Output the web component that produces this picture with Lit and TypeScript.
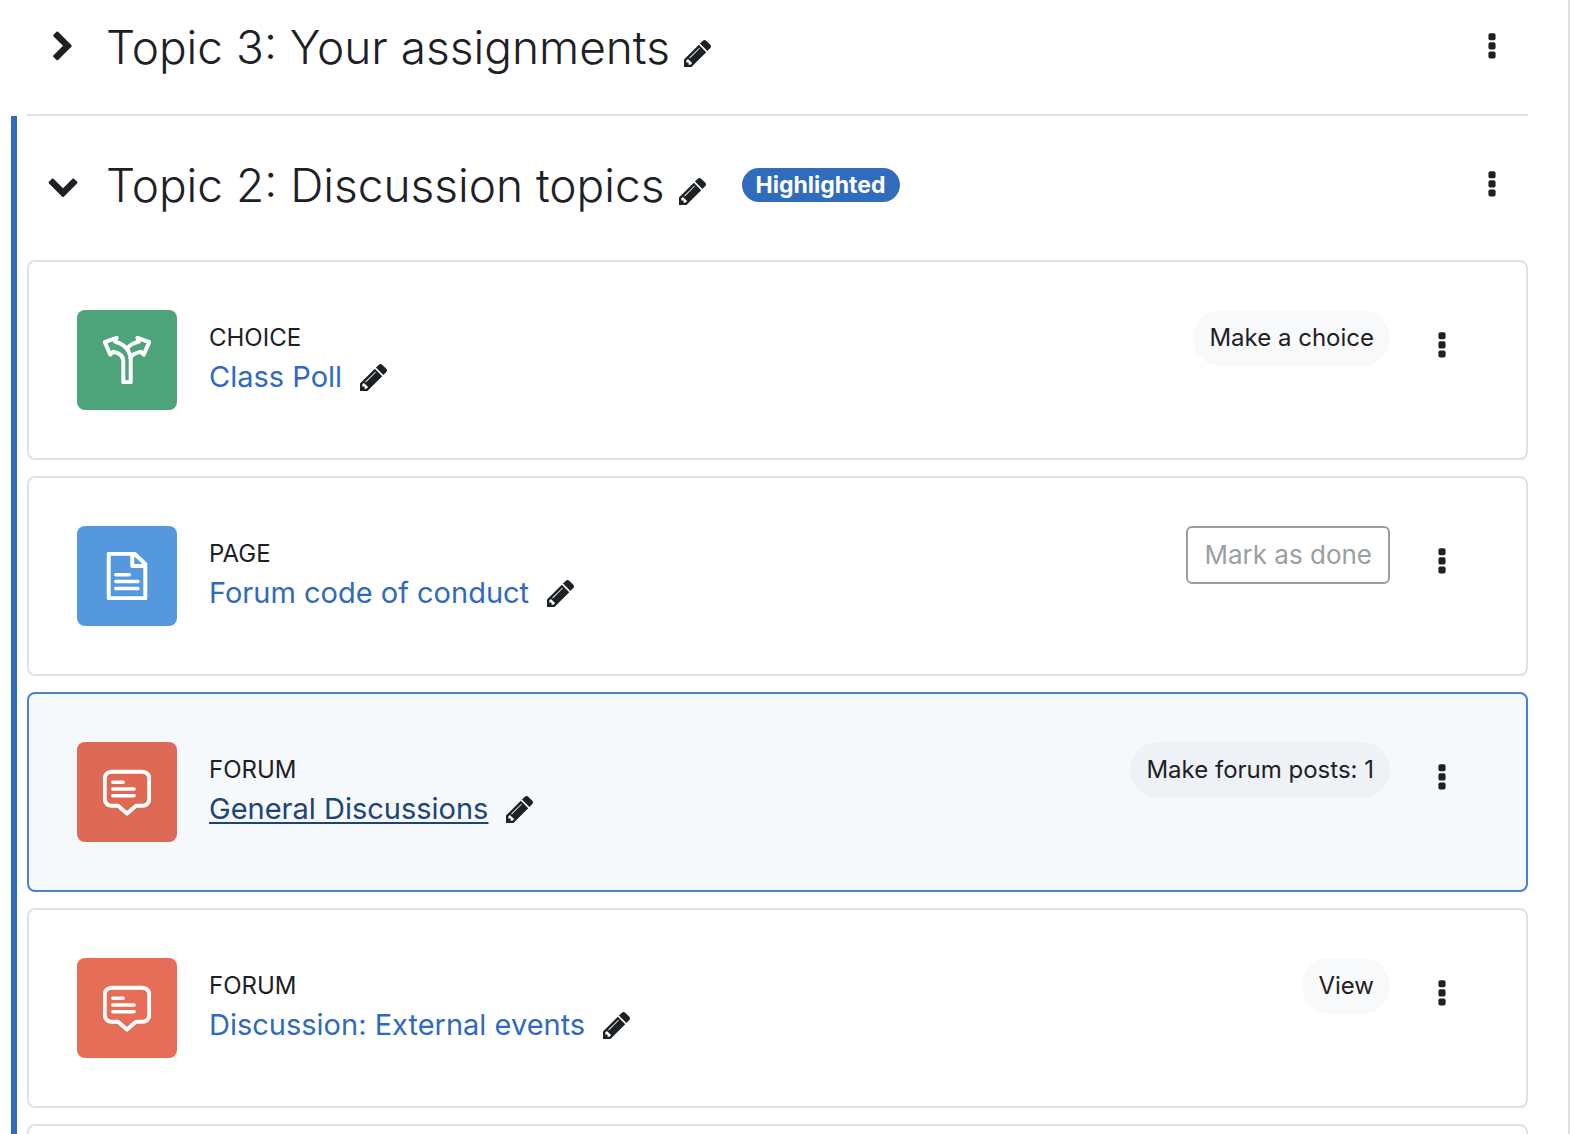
import { LitElement, html, css, svg, nothing } from "lit";
import { customElement, property } from "lit/decorators.js";
import { classMap } from "lit/directives/class-map.js";

type Kind = "choice" | "page" | "forum";

interface Activity {
  kind: Kind;
  name: string;
  action: string;
  outlined?: boolean;
  active?: boolean;
}

const ACTIVITIES: Activity[] = [
  { kind: "choice", name: "Class Poll", action: "Make a choice" },
  { kind: "page", name: "Forum code of conduct", action: "Mark as done", outlined: true },
  { kind: "forum", name: "General Discussions", action: "Make forum posts: 1", active: true },
  { kind: "forum", name: "Discussion: External events", action: "View" },
];

const shared = css`
  * {
    box-sizing: border-box;
  }
  button {
    margin: 0;
    padding: 0;
    border: 0;
    background: none;
    color: inherit;
    font: inherit;
    cursor: pointer;
  }
  svg {
    display: block;
    fill: currentColor;
  }
  .edit {
    flex: none;
  }
  .menu {
    flex: none;
    display: grid;
    justify-items: center;
    width: 72px;
  }
`;

const pencil = html`<svg width="27" height="27" viewBox="128 149 1515 1515" aria-hidden="true">
  <path d="M491 1536l91-91-235-235-91 91v107h128v128h107zm523-928q0-22-22-22-10 0-17 7l-542 542q-7 7-7 17 0 22 22 22 10 0 17-7l542-542q7-7 7-17zm-54-192l416 416-832 832h-416v-416zm683 96q0 53-37 90l-166 166-416-416 166-165q36-38 90-38 53 0 91 38l235 234q37 39 37 91z"/>
</svg>`;

const dots = html`<svg width="32" height="32" viewBox="0 0 1792 1792" aria-hidden="true">
  <rect x="696" y="120" width="400" height="400" rx="100"/>
  <rect x="696" y="632" width="400" height="400" rx="100"/>
  <rect x="696" y="1144" width="400" height="400" rx="100"/>
</svg>`;

const chevron = (open: boolean) => html`<svg width="32" height="32" viewBox="0 0 1792 1792" aria-hidden="true">
  ${open
    ? svg`<path d="M1683 808l-742 741q-19 19-45 19t-45-19l-742-741q-19-19-19-45.500t19-45.500l166-165q19-19 45-19t45 19l531 531 531-531q19-19 45-19t45 19l166 165q19 19 19 45.500t-19 45.500z"/>`
    : svg`<path d="M1363 877l-742 742q-19 19-45 19t-45-19l-166-166q-19-19-19-45t19-45l531-531-531-531q-19-19-19-45t19-45l166-166q19-19 45-19t45 19l742 742q19 19 19 45t-19 45z"/>`}
</svg>`;

const GLYPHS = {
  choice: svg`
    <path d="M20.300 46.300V25c0-5-4.300-8-10.300-9.200l-2.700 2.800L1.800 6.200 13.600 1.800l-1.300 3.900C19 7.500 24 11 26 16.500c1 2 1.700 4.500 1.700 7.500v22.300z"/>
    <path d="M24 13c2.500-4 6.500-6.300 11.700-7.300L34.400 1.800 46.200 6.200l-5.500 12.400-2.700-2.800c-5 1-9 3-10.500 6"/>`,
  page: svg`
    <path d="M5.700 1.700H31.500L42.300 12V46.300H5.700zM29.300 2V14H42"/>
    <path d="M12.800 22.700H26.200M12.800 29.600H35M12.800 36.400H35" stroke-width="3.500"/>`,
  forum: svg`
    <path d="M8.500 3.700h31a6.800 6.800 0 0 1 6.800 6.800V31a6.800 6.800 0 0 1-6.800 6.800H33L24 45.600 15 37.800H8.500A6.800 6.800 0 0 1 1.700 31V10.500A6.800 6.800 0 0 1 8.500 3.700z"/>
    <path d="M9.800 14.300H20.200M9.800 21H31M9.800 27.800H31" stroke-width="3.500"/>`,
};

@customElement("course-activity")
export class CourseActivity extends LitElement {
  @property({ attribute: false }) activity!: Activity;

  static styles = [
    shared,
    css`
      :host {
        display: block;
      }
      .card {
        display: flex;
        align-items: flex-start;
        min-height: 200px;
        padding: 48px;
        border: 2px solid #dee2e6;
        border-radius: 8px;
      }
      .card.active {
        background: #f5f9fc;
        border-color: #4a82c6;
      }
      .tile {
        flex: none;
        display: grid;
        place-items: center;
        width: 100px;
        height: 100px;
        border-radius: 8px;
        color: #fff;
      }
      .tile svg {
        fill: none;
        stroke: currentColor;
        stroke-linecap: round;
        stroke-linejoin: round;
      }
      .choice {
        background: #4da37a;
      }
      .page {
        background: #5598dd;
      }
      .forum {
        background: #e66d57;
      }
      .active .forum {
        background: #de6a55;
      }
      .info {
        flex: 1;
        min-width: 0;
        min-height: 100px;
        margin-left: 32px;
        padding-bottom: 2px;
        display: flex;
        flex-direction: column;
        justify-content: center;
      }
      .kind {
        font-size: 24px;
        line-height: 36px;
        text-transform: uppercase;
      }
      .title {
        display: flex;
        align-items: center;
        gap: 18px;
        line-height: 42px;
      }
      .link {
        color: #306abc;
        text-decoration: none;
      }
      .active .link {
        color: #1d4479;
        text-decoration: underline;
        text-decoration-thickness: 2px;
        text-underline-offset: 3px;
      }
      .action {
        flex: none;
        min-height: 56px;
        margin-right: 16px;
        padding: 0 16px;
        border-radius: 28px;
        background: #f8f9fb;
        font-size: 24px;
        line-height: 36px;
      }
      .active .action {
        background: #eef1f6;
      }
      .action.outlined {
        min-height: 58px;
        border: 2px solid #9a9fa4;
        border-radius: 6px;
        background: none;
        color: #9a9fa4;
        font-size: 26px;
      }
      .menu {
        padding: 20px 0 18px;
      }
    `,
  ];

  render() {
    const a = this.activity;
    return html`<article class=${classMap({ card: true, active: !!a.active })}>
      <div class="tile ${a.kind}">
        <svg width="48" height="48" viewBox="0 0 48 48" stroke-width="4" aria-hidden="true">${GLYPHS[a.kind]}</svg>
      </div>
      <div class="info">
        <div class="kind">${a.kind}</div>
        <div class="title">
          <a class="link" href="#">${a.name}</a>
          <button class="edit" aria-label="Edit title">${pencil}</button>
        </div>
      </div>
      <button class=${classMap({ action: true, outlined: !!a.outlined })}>${a.action}</button>
      <button class="menu" aria-label="Activity menu">${dots}</button>
    </article>`;
  }
}

@customElement("course-section")
export class CourseSection extends LitElement {
  @property() heading = "";
  @property({ type: Boolean }) open = false;
  @property({ type: Boolean }) highlighted = false;

  static styles = [
    shared,
    css`
      :host {
        display: block;
      }
      .section {
        padding: 0 40px 0 27px;
      }
      .section.highlighted {
        margin-left: 11px;
        padding-left: 10px;
        border-left: 6px solid #316bbe;
      }
      .header {
        display: flex;
        align-items: center;
        padding: 39px 0 45px;
      }
      .closed .header {
        padding: 17px 0 37px;
        border-bottom: 2px solid #dee2e6;
      }
      .toggle {
        flex: none;
        display: grid;
        justify-items: center;
        width: 72px;
      }
      .title {
        margin: 0 0 0 7px;
        font-size: 46px;
        font-weight: 300;
        line-height: 60px;
      }
      .edit {
        margin: 12px 0 0 14px;
      }
      .badge {
        margin-left: 36px;
        padding: 0 14px;
        border-radius: 17px;
        background: #316bbc;
        color: #fff;
        font-size: 23px;
        font-weight: 700;
        line-height: 34px;
      }
      .header .menu {
        margin-left: auto;
      }
    `,
  ];

  render() {
    return html`<section
      class=${classMap({ section: true, closed: !this.open, highlighted: this.highlighted })}
    >
      <div class="header">
        <button class="toggle" aria-label="Toggle section" aria-expanded=${this.open}>
          ${chevron(this.open)}
        </button>
        <h2 class="title">${this.heading}</h2>
        <button class="edit" aria-label="Edit section name">${pencil}</button>
        ${this.highlighted ? html`<span class="badge">Highlighted</span>` : nothing}
        <button class="menu" aria-label="Section menu">${dots}</button>
      </div>
      <slot></slot>
    </section>`;
  }
}

@customElement("app-root")
export class AppRoot extends LitElement {
  static styles = css`
    :host {
      display: block;
      height: 100vh;
      overflow: hidden;
      border-right: 2px solid #dfdfdf;
      box-sizing: border-box;
      background: #fff;
      color: #1d2125;
      font-family: Inter, "Liberation Sans", sans-serif;
      font-size: 29px;
    }
    .list {
      display: flex;
      flex-direction: column;
      gap: 16px;
    }
    .next {
      height: 200px;
      border: 2px solid #dee2e6;
      border-radius: 8px;
      box-sizing: border-box;
    }
  `;

  render() {
    return html`<main>
      <course-section heading="Topic 3: Your assignments"></course-section>
      <course-section heading="Topic 2: Discussion topics" open highlighted>
        <div class="list">
          ${ACTIVITIES.map((a) => html`<course-activity .activity=${a}></course-activity>`)}
          <div class="next"></div>
        </div>
      </course-section>
    </main>`;
  }
}
